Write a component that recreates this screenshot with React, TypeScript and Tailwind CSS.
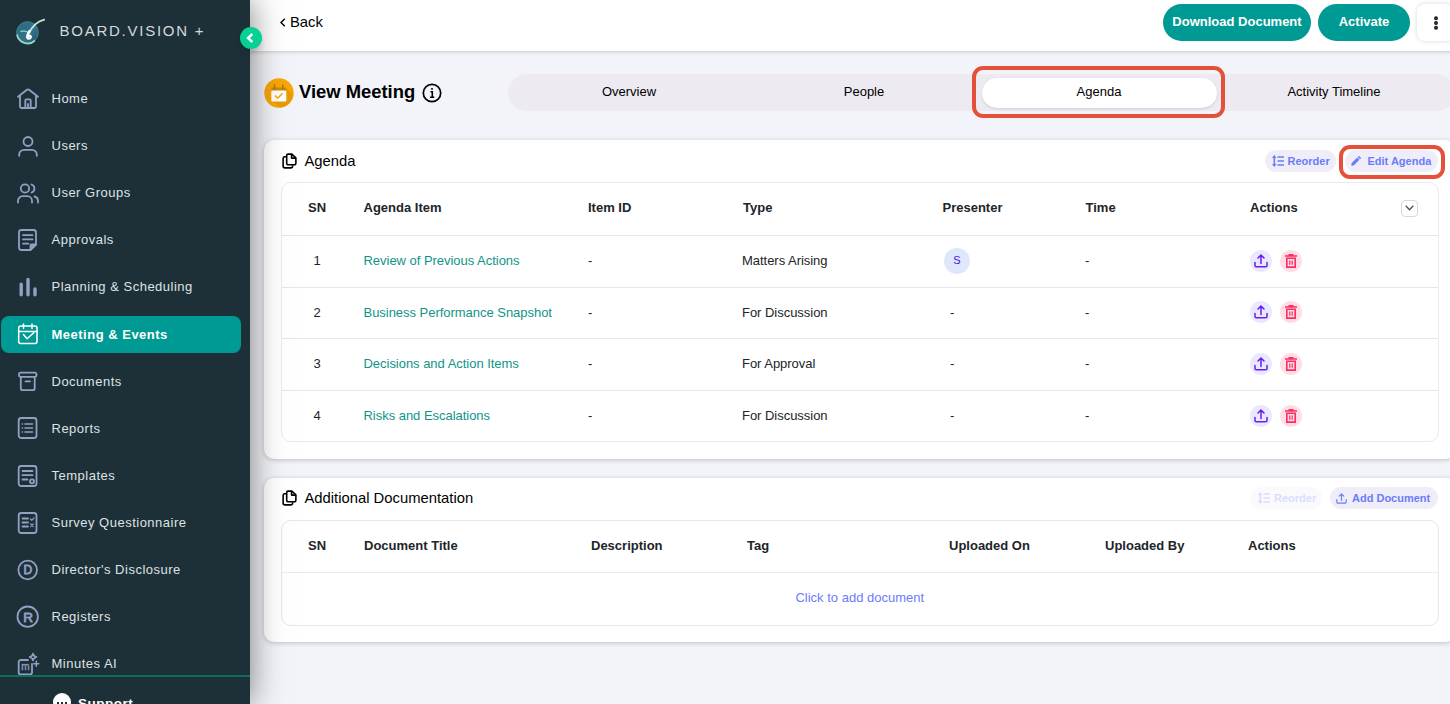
import type { ReactNode } from 'react'

const NAV: { label: string; icon: ReactNode; active?: boolean }[] = [
  {
    label: 'Home',
    icon: (
      <>
        <path d="M2 9.8 10.6 3a2.2 2.2 0 0 1 2.8 0L22 9.8" />
        <path d="M4 8.8V19a2 2 0 0 0 2 2h12a2 2 0 0 0 2-2V8.8" />
        <path d="M9.3 21v-7.6a1 1 0 0 1 1-1h3.4a1 1 0 0 1 1 1V21M12 17v4" />
      </>
    ),
  },
  {
    label: 'Users',
    icon: (
      <>
        <circle cx="12" cy="7.5" r="4.5" />
        <path d="M3.2 21.8v-1.100a5 5 0 0 1 5-4.900h7.600a5 5 0 0 1 5 4.900v1.100" />
      </>
    ),
  },
  {
    label: 'User Groups',
    icon: (
      <>
        <circle cx="9" cy="7.5" r="4.2" />
        <path d="M2 21.5v-1.8a4.5 4.5 0 0 1 4.5-4.5h5a4.5 4.5 0 0 1 4.5 4.5v1.8" />
        <path d="M15.5 3.5a4.2 4.2 0 0 1 0 8M18.5 15.5a4.5 4.5 0 0 1 3.5 4.3v1.7" />
      </>
    ),
  },
  {
    label: 'Approvals',
    icon: (
      <>
        <path d="M14.5 22H5.500a2.500 2.500 0 0 1-2.500-2.500v-15A2.500 2.500 0 0 1 5.500 2h12A2.500 2.500 0 0 1 20 4.500V16.500z" />
        <path d="M7 7.200h9.500M7 11.400h9.500M7 15.600h5.500" />
        <path d="M14.5 21.5v-4a1 1 0 0 1 1-1h4.500z" fill="currentColor" />
      </>
    ),
  },
  {
    label: 'Planning & Scheduling',
    icon: <path d="M5.2 9.2v10.5M12 4.5v15.2M19 14v5.7" strokeWidth="3.4" />,
  },
  {
    label: 'Meeting & Events',
    active: true,
    icon: (
      <>
        <rect x="2.7" y="4" width="18.3" height="17.5" rx="2" />
        <path d="M2.7 9.500H21M7.500 2v4.500M16 2v4.500M7.500 12.500l3.500 4.300 6.800-6" />
      </>
    ),
  },
  {
    label: 'Documents',
    icon: (
      <>
        <rect x="3" y="3.7" width="17.5" height="4.2" rx="1.8" />
        <path d="M4.8 8v11.2a2 2 0 0 0 2 2h9.9a2 2 0 0 0 2-2V8M9.5 12.4h4.5" />
      </>
    ),
  },
  {
    label: 'Reports',
    icon: (
      <>
        <rect x="2.7" y="2" width="17.8" height="20" rx="2.5" />
        <path d="M9 8h7.5M9 12h7.5M9 16h7.5M6.3 8h.2M6.3 12h.2M6.3 16h.2" strokeWidth="1.6" />
      </>
    ),
  },
  {
    label: 'Templates',
    icon: (
      <>
        <rect x="2.7" y="2" width="17.8" height="20" rx="2.5" />
        <path d="M6.5 7h10M6.5 11.2h10M6.5 15.5h5" />
        <circle cx="16" cy="17.3" r="2" />
      </>
    ),
  },
  {
    label: 'Survey Questionnaire',
    icon: (
      <>
        <rect x="2.7" y="2" width="17.8" height="20" rx="2.5" />
        <path d="M6.5 7.5h5.5M6.5 11.5h5.5M6.5 15.5h5.5" />
        <path d="m14.5 8 1.3 1.3L18 7M14.7 13l2.5 2.5m0-2.5-2.5 2.5" strokeWidth="1.2" />
      </>
    ),
  },
  {
    label: "Director's Disclosure",
    icon: (
      <>
        <circle cx="11.7" cy="12" r="9.3" />
        <text x="11.8" y="16.3" textAnchor="middle" fontSize="12" fill="currentColor" strokeWidth=".8">D</text>
      </>
    ),
  },
  {
    label: 'Registers',
    icon: (
      <>
        <circle cx="11.7" cy="11.7" r="10.2" />
        <text x="12" y="16.5" textAnchor="middle" fontSize="13.5" fill="currentColor" strokeWidth=".8">R</text>
      </>
    ),
  },
  {
    label: 'Minutes AI',
    icon: (
      <>
        <path d="M12 8H4.700a2 2 0 0 0-2 2V20.500a2 2 0 0 0 2 2h9.300a2 2 0 0 0 2-2V12" />
        <text x="9.300" y="18" textAnchor="middle" fontSize="10" fill="currentColor" strokeWidth=".3">m</text>
        <path
          d="M17 1.500c.4 2.300 1 3 3.500 3.500-2.500.5-3.100 1.200-3.500 3.500-.4-2.300-1-3-3.500-3.500 2.500-.5 3.100-1.200 3.500-3.500zM20.300 9.300v5M17.800 11.800h5"
          strokeWidth="1.5"
        />
      </>
    ),
  },
]

const TABS = ['Overview', 'People', 'Agenda', 'Activity Timeline']

const AGENDA = [
  { title: 'Review of Previous Actions', type: 'Matters Arising', presenter: 'S' },
  { title: 'Business Performance Snapshot', type: 'For Discussion' },
  { title: 'Decisions and Action Items', type: 'For Approval' },
  { title: 'Risks and Escalations', type: 'For Discussion' },
]

const AGENDA_COLS = 'grid grid-cols-[70px_224px_155px_200px_143px_164px_1fr] items-center'
const DOC_COLS = 'grid grid-cols-[70px_227px_156px_202px_156px_143px_1fr] items-center'

function Logo() {
  return (
    <svg width="30" height="28" viewBox="0 0 30 28" fill="none" className="shrink-0">
      <defs>
        <linearGradient id="globe" x1="0" y1="0" x2="1" y2="1">
          <stop offset="0" stopColor="#2a6a80" />
          <stop offset=".6" stopColor="#35718a" />
          <stop offset="1" stopColor="#1f4c5c" />
        </linearGradient>
      </defs>
      <circle cx="11.5" cy="15.5" r="10.8" fill="url(#globe)" stroke="#3f858c" />
      <path d="M1 17.5a10.8 10.8 0 0 0 18 6" stroke="#8ed5c6" strokeWidth="1.8" />
      <path d="M28.2 2.7C20.500 4.700 16 9.500 13 16.500" stroke="#bfe5df" strokeWidth="1.8" strokeLinecap="round" />
      <path d="M4.500 14.500c3-.7 5.500-.3 7.500.8" stroke="#8ed5c6" strokeWidth="1.300" />
      <path d="M13.500 14c-1.800 3-2.800 5-2.200 6.500.6 1.500 2.800 1.500 3.400-.1.400-1.300-.8-2.200-2-1.600" stroke="#fff" strokeWidth="2.400" strokeLinecap="round" />
    </svg>
  )
}

function UploadIcon({ size = 14 }: { size?: number }) {
  return (
    <svg width={size} height={size} viewBox="0 0 14 14" fill="none" stroke="currentColor" strokeWidth="1.5" strokeLinecap="round" strokeLinejoin="round">
      <path d="M1 8.5v3a1.3 1.3 0 0 0 1.3 1.3h9.4A1.3 1.3 0 0 0 13 11.5v-3M7 9.5V1.2M4 4l3-2.900L10 4" />
    </svg>
  )
}

function TrashIcon() {
  return (
    <svg width="12" height="14" viewBox="0 0 12 14" fill="none" stroke="currentColor" strokeWidth="1.6">
      <path d="M0 2h12M3.500.8h5M1.800 4.200h8.400v8.900H1.800z" />
      <path d="M4.800 6.500v4.300M7.200 6.500v4.300" strokeWidth="1.2" />
    </svg>
  )
}

function CopyIcon() {
  return (
    <svg width="15" height="16" viewBox="0 0 16 17" fill="none" stroke="#000" strokeWidth="1.7" strokeLinejoin="round" className="ml-px">
      <path d="M6.500 1.200h4L14.800 5.200v5.800a1.500 1.500 0 0 1-1.500 1.500H6.500A1.500 1.500 0 0 1 5 11V2.700A1.500 1.500 0 0 1 6.500 1.200z" />
      <path d="M10.200 1.500v3.900h4.200" />
      <path d="M4.800 4H3A1.800 1.800 0 0 0 1.200 5.800v8.100A1.900 1.900 0 0 0 3.100 15.800h6.400a1.800 1.800 0 0 0 1.800-1.800v-1" />
    </svg>
  )
}

function ReorderIcon() {
  return (
    <svg width="12" height="12" viewBox="0 0 12 12" fill="currentColor">
      <path d="M2.300 0 4.600 3H3.100v6h1.500L2.300 12 0 9h1.500V3H0z" />
      <path d="M5.500 1.300H12v1.400H5.500zM5.500 5.300H12v1.400H5.500zM5.500 9.300H12v1.400H5.500z" />
    </svg>
  )
}

function PencilIcon() {
  return (
    <svg width="10" height="10" viewBox="0 0 10 10" fill="currentColor">
      <path d="M.5 7.300 6.200 1.600l2.200 2.200L2.700 9.500l-2.300.2zM6.800 1l.7-.7a.8.8 0 0 1 1.100 0l1.100 1.100a.8.8 0 0 1 0 1.100l-.7.7z" />
    </svg>
  )
}

function Sidebar() {
  return (
    <aside className="relative z-10 flex w-[250px] shrink-0 flex-col bg-[#1d3038] shadow-[0_0_32px_rgba(0,0,0,0.52)]">
      <div className="flex h-[62px] shrink-0 items-center gap-[13.5px] pl-4">
        <Logo />
        <span className="text-[15px] tracking-[1.75px] text-[#d5d9dc]">BOARD.VISION +</span>
      </div>
      <nav className="flex min-h-0 flex-1 flex-col gap-[9.6px] overflow-hidden pt-[18.5px] pr-[9px] pl-px">
        {NAV.map(({ label, icon, active }) => (
          <a
            key={label}
            className={
              active
                ? 'flex h-[37.5px] shrink-0 items-center gap-[11.5px] rounded-lg bg-[#009a94] pb-[0.5px] pl-[15px] font-bold text-white'
                : 'flex h-[37.5px] shrink-0 items-center gap-[11.5px] rounded-lg pb-[1px] pl-[15px] text-[#dfe2e4]'
            }
          >
            <svg
              width="24"
              height="24"
              viewBox="0 0 24 24"
              fill="none"
              stroke="currentColor"
              strokeWidth={active ? 1.5 : 1.8}
              strokeLinecap="round"
              strokeLinejoin="round"
              className={active ? 'text-white' : 'text-[#939fc3]'}
            >
              {icon}
            </svg>
            <span className="text-[13px] tracking-[0.5px]">{label}</span>
          </a>
        ))}
      </nav>
      <div className="flex h-[29px] shrink-0 items-start gap-[7px] overflow-hidden border-t-2 border-[#0b6f5f] pt-[16px] pl-[53px] text-white">
        <svg width="18" height="18" viewBox="0 0 18 18" className="shrink-0">
          <circle cx="9" cy="9" r="9" fill="#fff" />
          <path d="M4 9h2v2H4zM8 9h2v2H8zM12 9h2v2h-2z" fill="#1d3038" />
        </svg>
        <span className="pt-[2px] text-[13.5px] leading-[18px] font-bold tracking-[0.5px]">Support</span>
      </div>
      <button className="absolute top-[26.5px] right-[-12px] flex size-[22.5px] items-center justify-center rounded-full bg-[#05d096] shadow-md">
        <svg width="8" height="10" viewBox="0 0 8 10" fill="none" stroke="#fff" strokeWidth="2.4" className="mr-px">
          <path d="M6.3 1 2 5l4.3 4" />
        </svg>
      </button>
    </aside>
  )
}

function PillButton({ icon, label, className }: { icon: ReactNode; label: string; className: string }) {
  return (
    <button className={`flex h-[22px] items-center rounded-full bg-[#efedf7] text-[11px] font-bold text-[#6b7cfb] ${className}`}>
      {icon}
      {label}
    </button>
  )
}

function AgendaCard() {
  return (
    <section className="h-[319px] rounded-[10px] bg-white pt-[10px] pr-[17px] pl-[17px] shadow-[0_1px_5px_rgba(0,0,0,0.22)]">
      <div className="flex h-[22px] items-center">
        <CopyIcon />
        <h2 className="ml-[7.5px] text-[14.8px]">Agenda</h2>
        <div className="ml-auto flex items-center gap-[9px]">
          <PillButton icon={<ReorderIcon />} label="Reorder" className="w-[71px] gap-[3.5px] pl-[7px]" />
          <div className="relative">
            <PillButton icon={<PencilIcon />} label="Edit Agenda" className="w-[93px] gap-[6.5px] pl-[6px]" />
            <div className="absolute -top-[5px] -left-[6px] h-[34px] w-[106px] rounded-[11px] border-4 border-[#e5503b]" />
          </div>
        </div>
      </div>
      <div className="mt-[10px] h-[260px] w-[1157.5px] rounded-[10px] border border-[#e8eaee]">
        <div className={`${AGENDA_COLS} h-[52px] pb-[2px] text-[13px] font-bold text-[#212529]`}>
          <span className="text-center">SN</span>
          <span className="pl-[11.5px]">Agenda Item</span>
          <span className="pl-3">Item ID</span>
          <span className="pl-3">Type</span>
          <span className="pl-[11.5px]">Presenter</span>
          <span className="pl-[11.5px]">Time</span>
          <span className="flex items-center justify-between pr-5 pl-3">
            Actions
            <span className="flex size-[17px] items-center justify-center rounded border border-[#d3d8e5]">
              <svg width="9" height="6" viewBox="0 0 9 6" fill="none" stroke="#4b5563" strokeWidth="1.3">
                <path d="m.7.7 3.800 4 3.800-4" />
              </svg>
            </span>
          </span>
        </div>
        {AGENDA.map(({ title, type, presenter }, i) => (
          <div key={title} className={`${AGENDA_COLS} h-[51.7px] border-t border-[#e6e7ea] pb-[1.5px] text-[13px] text-[#212529]`}>
            <span className="text-center">{i + 1}</span>
            <span className="pl-[11.5px] tracking-[-0.03px] whitespace-nowrap text-[#109488]">{title}</span>
            <span className="pl-3">-</span>
            <span className="pl-[11px] tracking-[-0.03px]">{type}</span>
            {presenter ? (
              <span className="ml-[13px] flex size-[26px] items-center justify-center rounded-full bg-[#dfe7fd] text-[11px] text-[#4a14e0]">
                {presenter}
              </span>
            ) : (
              <span className="pl-[19px]">-</span>
            )}
            <span className="pl-[11px]">-</span>
            <span className="flex gap-2 pl-3">
              <span className="flex size-[22px] items-center justify-center rounded-full bg-[#e8e9ff] text-[#6a1cf0]">
                <UploadIcon />
              </span>
              <span className="flex size-[22px] items-center justify-center rounded-full bg-[#ffdde5] text-[#fb2c63]">
                <TrashIcon />
              </span>
            </span>
          </div>
        ))}
      </div>
    </section>
  )
}

function DocumentsCard() {
  return (
    <section className="mt-[19px] h-[164px] rounded-[10px] bg-white pt-[9px] pr-[17px] pl-[17px] shadow-[0_1px_5px_rgba(0,0,0,0.22)]">
      <div className="flex h-[22px] items-center">
        <CopyIcon />
        <h2 className="ml-[7.5px] text-[14.8px]">Additional Documentation</h2>
        <div className="ml-auto flex items-center gap-[8px]">
          <PillButton icon={<ReorderIcon />} label="Reorder" className="w-[71px] gap-1 pl-[7px] opacity-25" />
          <PillButton icon={<UploadIcon size={11} />} label="Add Document" className="w-[108px] gap-[5px] pl-[6px]" />
        </div>
      </div>
      <div className="mt-[11px] h-[106px] w-[1157.5px] rounded-[10px] border border-[#e3e7ee]">
        <div className={`${DOC_COLS} h-[51px] pb-px text-[13px] font-bold text-[#212529]`}>
          <span className="text-center">SN</span>
          <span className="pl-3">Document Title</span>
          <span className="pl-3">Description</span>
          <span className="pl-3">Tag</span>
          <span className="pl-3">Uploaded On</span>
          <span className="pl-3">Uploaded By</span>
          <span className="pl-3">Actions</span>
        </div>
        <div className="flex h-[52px] items-center justify-center border-t border-[#eaebef] pb-px text-[13px] text-[#6b7cfb]">
          Click to add document
        </div>
      </div>
    </section>
  )
}

export default function App() {
  return (
    <div className="flex h-[704px] w-[1450px] overflow-hidden bg-[#f3f4f9] font-['Liberation_Sans',Arial,sans-serif] text-black">
      <Sidebar />
      <main className="w-[1205px] shrink-0">
        <header className="flex h-[51px] items-start bg-white pt-1 pr-px pl-[30px] shadow-[0_1px_4px_rgba(0,0,0,0.18)]">
          <button className="flex h-9 items-center gap-[4px] text-[14.8px]">
            <svg width="6" height="9" viewBox="0 0 6 9" fill="none" stroke="#000" strokeWidth="1.4">
              <path d="M4.8.7 1 4.500l3.800 3.800" />
            </svg>
            Back
          </button>
          <button className="ml-auto h-[37px] w-[148px] rounded-full bg-[#009a94] pb-px text-[13px] font-bold text-white">
            Download Document
          </button>
          <button className="ml-[7px] h-[37px] w-[92px] rounded-full bg-[#009a94] pb-px text-[13px] font-bold text-white">
            Activate
          </button>
          <button className="ml-[7px] flex h-[37px] w-[37px] items-center justify-center rounded-lg bg-white shadow-[0_0_4px_rgba(0,0,0,0.16)]">
            <svg width="6" height="14" viewBox="0 0 6 14" fill="none" stroke="#111" strokeWidth="1.5">
              <circle cx="3" cy="2.2" r="1.2" />
              <circle cx="3" cy="7" r="1.2" />
              <circle cx="3" cy="11.8" r="1.2" />
            </svg>
          </button>
        </header>

        <div className="flex h-[89px] pt-[23px] pl-[14px]">
          <div className="flex h-[37px] w-[244px] items-center">
            <svg width="30" height="30" viewBox="0 0 30 30">
              <circle cx="15" cy="15" r="14.7" fill="#f9a606" />
              <path d="M22.500 10 29 17a14.700 14.700 0 0 1-12.500 12.600L8 22z" fill="#e89b05" />
              <path d="M7.500 9.500h14.500v3.500H7.500z" fill="#c98a0a" />
              <path d="M10.500 6.500v5M18.800 6.500v5" stroke="#a8780c" strokeWidth="1.4" />
              <rect x="7.3" y="12.5" width="15" height="11" rx="1.3" fill="#fff" />
              <path d="m11 17.500 2.700 2.700 5-5" stroke="#f9a606" strokeWidth="1.5" fill="none" />
            </svg>
            <h1 className="mb-px ml-[5px] text-[18.4px] font-bold whitespace-nowrap">View Meeting</h1>
            <svg width="20" height="20" viewBox="0 0 20 20" fill="none" stroke="#000" className="mt-[1px] ml-[7px]">
              <circle cx="10" cy="10" r="8.7" strokeWidth="1.7" />
              <path d="M8.500 8.700h1.800v5.500M8 14.200h4.300M10 5v1.700" strokeWidth="1.6" />
            </svg>
          </div>
          <div className="flex h-[37px] w-[947px] items-center rounded-full bg-[#edebf1] px-[3.5px]">
            {TABS.map((tab) =>
              tab === 'Agenda' ? (
                <div key={tab} className="relative flex h-[30px] w-[235px] items-center justify-center rounded-full bg-white pb-[2px] text-[13px] shadow-sm">
                  {tab}
                  <div className="absolute -top-[12px] -left-[9.5px] h-[52px] w-[253px] rounded-[11px] border-4 border-[#e5503b]" />
                </div>
              ) : (
                <div key={tab} className="flex h-[30px] w-[235px] items-center justify-center pb-[2px] text-[13px]">
                  {tab}
                </div>
              ),
            )}
          </div>
        </div>

        <div className="pl-[14px]">
          <AgendaCard />
          <DocumentsCard />
        </div>
      </main>
    </div>
  )
}
